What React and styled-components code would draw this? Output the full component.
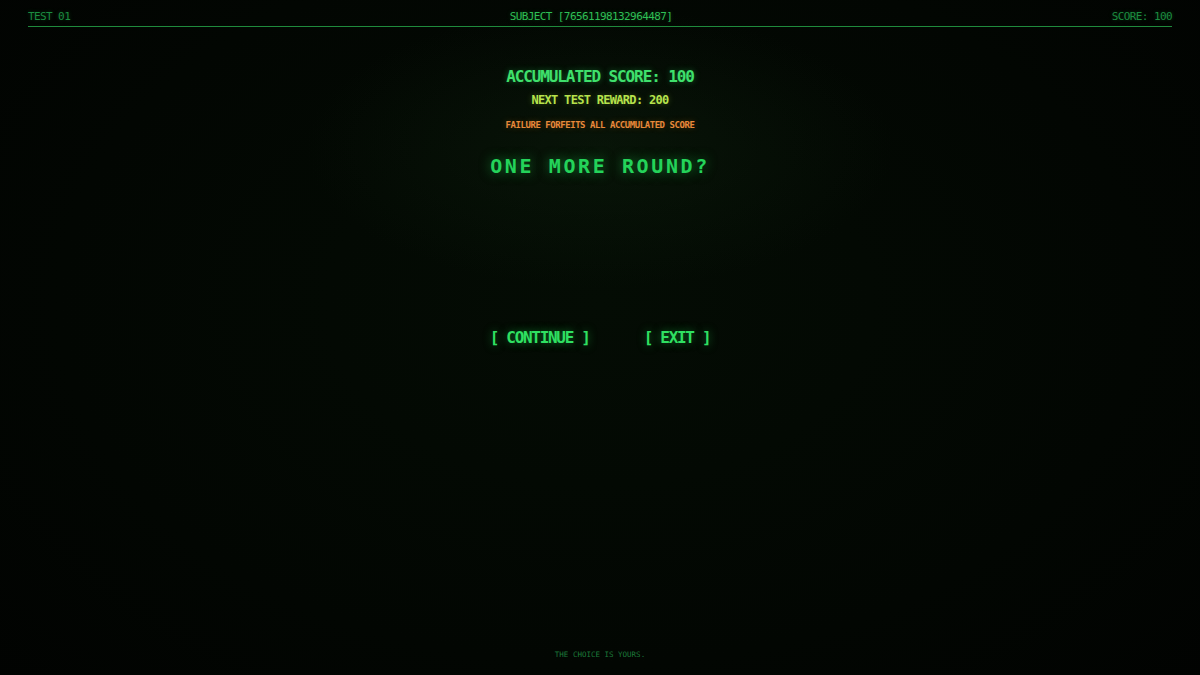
import React from "react";
import styled, { createGlobalStyle } from "styled-components";

const Global = createGlobalStyle`
  html, body, #root { margin: 0; padding: 0; width: 100%; height: 100%; }
  body { background: #020502; overflow: hidden; }
`;

const mono = `"DejaVu Sans Mono", "Liberation Mono", monospace`;

const Screen = styled.div`
  width: 1200px;
  height: 675px;
  box-sizing: border-box;
  padding: 0 28px;
  display: flex;
  flex-direction: column;
  font-family: ${mono};
  background:
    radial-gradient(ellipse 420px 200px at 50% 22%, rgba(14, 34, 14, 0.45), rgba(6, 16, 6, 0) 70%),
    radial-gradient(ellipse 900px 600px at 50% 45%, #040c04 0%, #020602 60%, #010201 100%);
`;

const TopBar = styled.header`
  display: flex;
  justify-content: space-between;
  align-items: flex-end;
  height: 27px;
  border-bottom: 1px solid #1f8a3c;
  box-sizing: border-box;
  padding-bottom: 4px;
`;

const BarText = styled.span`
  font-size: 11px;
  letter-spacing: -0.6px;
  line-height: 1;
  color: ${(p) => (p.$bright ? "#2fbf55" : "#1c8c40")};
  text-shadow: 0 0 4px rgba(40, 200, 80, 0.3);
`;

const Main = styled.main`
  flex: 1;
  display: flex;
  flex-direction: column;
  align-items: center;
  padding-top: 42px;
`;

const Line = styled.div`
  font-size: ${(p) => p.$size}px;
  letter-spacing: ${(p) => p.$ls}px;
  font-weight: ${(p) => (p.$bold ? 700 : 400)};
  color: ${(p) => p.$color};
  line-height: 1;
  margin-top: ${(p) => p.$mt || 0}px;
  text-shadow: 0 0 ${(p) => p.$glow || 6}px ${(p) => p.$shadow};
  white-space: nowrap;
`;

const Actions = styled.div`
  display: flex;
  gap: 54px;
  margin-top: 154px;
`;

const Action = styled.button`
  background: none;
  border: none;
  padding: 0;
  cursor: pointer;
  font-family: ${mono};
  font-size: 16px;
  font-weight: 700;
  letter-spacing: -1.3px;
  color: #2fe062;
  line-height: 1;
  text-shadow: 0 0 8px rgba(40, 220, 90, 0.5);
  white-space: pre;
`;

const Footer = styled.footer`
  display: flex;
  justify-content: center;
  padding-bottom: 16px;
  font-size: 7.5px;
  color: #1c7a3a;
`;

export default function App() {
  return (
    <>
      <Global />
      <Screen>
        <TopBar>
          <BarText>TEST 01</BarText>
          <BarText $bright>SUBJECT [76561198132964487]</BarText>
          <BarText>SCORE: 100</BarText>
        </TopBar>
        <Main>
          <Line $size={16} $ls={-1.1} $bold $color="#3fe06c" $shadow="rgba(50,220,100,0.4)">
            ACCUMULATED SCORE: 100
          </Line>
          <Line $size={12} $ls={-0.7} $bold $mt={9} $color="#b6e24c" $shadow="rgba(180,230,70,0.3)">
            NEXT TEST REWARD: 200
          </Line>
          <Line $size={9} $ls={-0.45} $bold $mt={15} $color="#e8893a" $shadow="rgba(232,137,58,0.3)">
            FAILURE FORFEITS ALL ACCUMULATED SCORE
          </Line>
          <Line $size={20} $ls={2.6} $bold $mt={26} $glow={12} $color="#24d35a" $shadow="rgba(30,210,80,0.55)">
            ONE MORE ROUND?
          </Line>
          <Actions>
            <Action>[ CONTINUE ]</Action>
            <Action>[ EXIT ]</Action>
          </Actions>
        </Main>
        <Footer>THE CHOICE IS YOURS.</Footer>
      </Screen>
    </>
  );
}
